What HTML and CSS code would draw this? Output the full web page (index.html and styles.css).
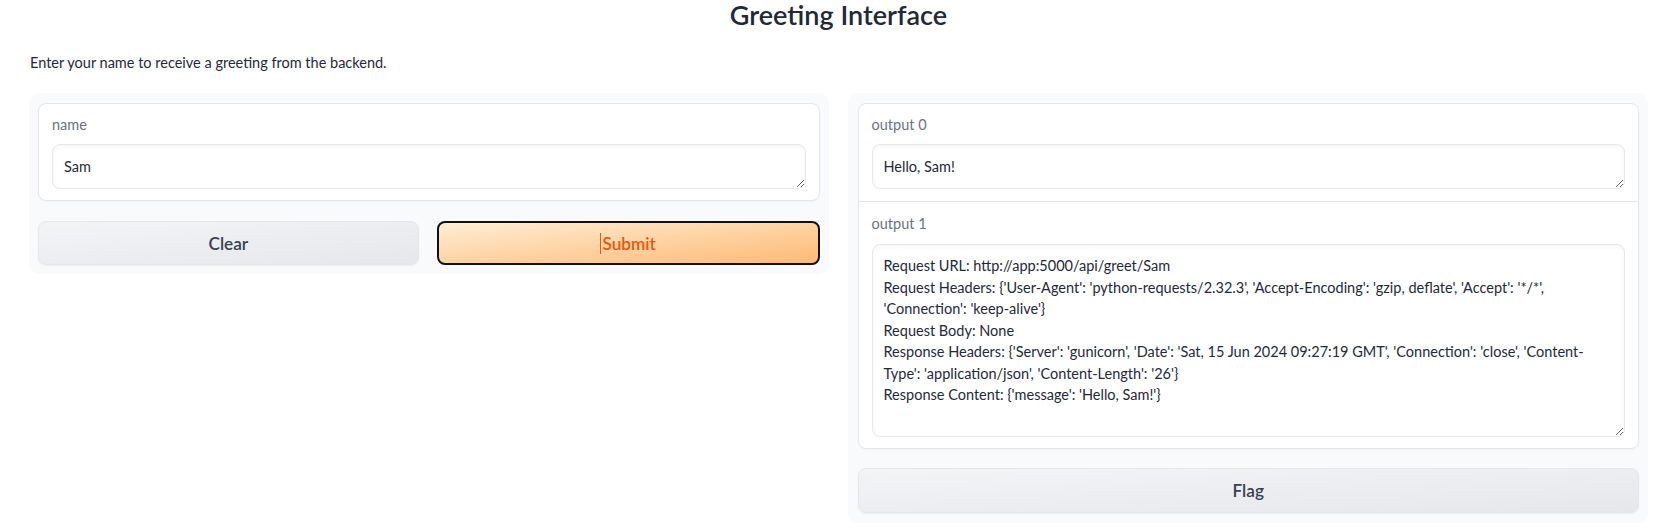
FILE: index.html
```html
<!DOCTYPE html>
<html lang="en">
<head>
<meta charset="utf-8">
<title>Greeting Interface</title>
<link rel="stylesheet" href="styles.css">
</head>
<body>
<div class="app">
  <h1 class="title">Greeting Interface</h1>
  <p class="desc">Enter your name to receive a greeting from the backend.</p>
  <div class="columns">
    <div class="panel panel-left">
      <div class="block">
        <div class="section">
          <label class="label" for="name">name</label>
          <textarea id="name" class="input input-sm">Sam</textarea>
        </div>
      </div>
      <div class="btn-row">
        <button class="btn btn-secondary">Clear</button>
        <button class="btn btn-primary"><span class="caret"></span>Submit</button>
      </div>
    </div>
    <div class="panel panel-right">
      <div class="block">
        <div class="section section-first">
          <label class="label" for="out0">output 0</label>
          <textarea id="out0" class="input input-sm">Hello, Sam!</textarea>
        </div>
        <div class="section section-second">
          <label class="label" for="out1">output 1</label>
          <textarea id="out1" class="input input-lg" wrap="off">Request URL: http://app:5000/api/greet/Sam
Request Headers: {'User-Agent': 'python-requests/2.32.3', 'Accept-Encoding': 'gzip, deflate', 'Accept': '*/*',
'Connection': 'keep-alive'}
Request Body: None
Response Headers: {'Server': 'gunicorn', 'Date': 'Sat, 15 Jun 2024 09:27:19 GMT', 'Connection': 'close', 'Content-
Type': 'application/json', 'Content-Length': '26'}
Response Content: {'message': 'Hello, Sam!'}</textarea>
        </div>
      </div>
      <button class="btn btn-secondary btn-flag">Flag</button>
    </div>
  </div>
</div>
</body>
</html>
```
FILE: styles.css
```css
* { box-sizing: border-box; }

html, body {
  margin: 0;
  background: #ffffff;
}

body {
  font-family: "Lato", "Open Sans", sans-serif;
  color: #1f2937;
  font-size: 14.5px;
}

.app {
  padding: 0 6px 0 29px;
}

.title {
  margin: 0;
  text-align: center;
  font-size: 27px;
  line-height: 30px;
  font-weight: 600;
  color: #1f2937;
}

.desc {
  margin: 22px 0 20px 1px;
  line-height: 21px;
  font-size: 14.5px;
  color: #1f2937;
}

.columns {
  display: flex;
  gap: 19px;
  align-items: flex-start;
}

.panel {
  flex: 1 1 0;
  min-width: 0;
  background: #f9fafb;
  border-radius: 10px;
  display: flex;
  flex-direction: column;
}

.panel-left {
  padding: 10px 9px 9px 9px;
  gap: 20px;
}

.panel-right {
  padding: 10px 9px 10px 10px;
  gap: 19px;
}

.block {
  background: #ffffff;
  border: 1px solid #e5e7eb;
  border-radius: 8px;
  box-shadow: 0 1px 2px rgba(0, 0, 0, 0.03);
  display: flex;
  flex-direction: column;
}

.section {
  padding: 11px 13px 11px 13px;
  display: flex;
  flex-direction: column;
}

.section-first {
  padding-bottom: 12px;
  border-bottom: 1px solid #e5e7eb;
}

.section-second {
  padding-top: 12px;
}

.label {
  display: block;
  line-height: 20px;
  font-size: 14.5px;
  color: #6b7280;
  margin-bottom: 9px;
}

.section-second .label {
  margin-bottom: 10px;
}

.input {
  display: block;
  width: 100%;
  margin: 0;
  font-family: "Lato", "Open Sans", sans-serif;
  font-size: 14.5px;
  line-height: 21.5px;
  color: #1f2937;
  background: #ffffff;
  border: 1px solid #e5e7eb;
  border-radius: 8px;
  box-shadow: inset 0 2px 4px rgba(0, 0, 0, 0.04);
  padding: 11px 11px;
  outline: none;
  overflow: hidden;
}

.input-sm {
  height: 45px;
}

.input-lg {
  height: 193px;
  padding-top: 10px;
  white-space: pre;
}

.btn-row {
  display: flex;
  gap: 18px;
}

.btn {
  flex: 1 1 0;
  height: 44px;
  border-radius: 8px;
  font-family: "Lato", "Open Sans", sans-serif;
  font-size: 17.2px;
  font-weight: 600;
  cursor: pointer;
  display: flex;
  align-items: center;
  justify-content: center;
}

.btn-secondary {
  background: linear-gradient(to bottom right, #f3f4f6, #e5e7eb);
  border: 1px solid #e5e7eb;
  color: #374151;
  box-shadow: 0 1px 2px rgba(0, 0, 0, 0.05);
}

.btn-primary {
  background: linear-gradient(to bottom right, #ffedd5, #fdba74);
  border: 2px solid #111111;
  color: #ea580c;
  position: relative;
}

.caret {
  display: inline-block;
  width: 1px;
  height: 21px;
  background: #ea580c;
  margin-right: 1px;
}

.btn-flag {
  flex: none;
  width: 100%;
  height: 45px;
}
```
